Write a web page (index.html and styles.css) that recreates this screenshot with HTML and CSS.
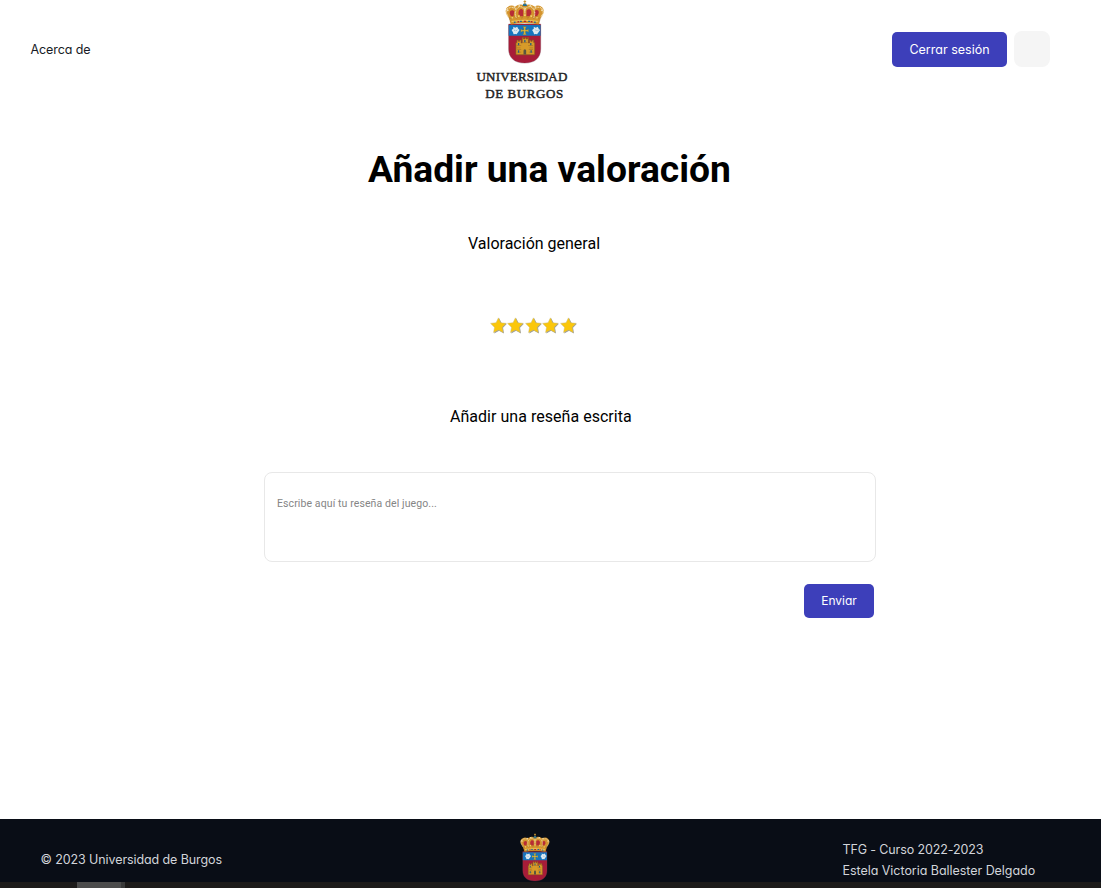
FILE: index.html
```html
<!DOCTYPE html>
<html lang="es">
<head>
<meta charset="utf-8">
<title>Añadir una valoración</title>
<link rel="stylesheet" href="styles.css">
</head>
<body>
<svg class="symbols" aria-hidden="true">
  <symbol id="crest" viewBox="14 0 124 192">
    <path d="M25 72h97v75c0 28-18 43-48.500 43S25 175 25 147z" fill="#a81c38"/>
    <path d="M25 75h97v32H25z" fill="#1674bd"/>
    <path d="M25 72h97v75c0 28-18 43-48.500 43S25 175 25 147z" fill="none" stroke="#714457" stroke-width="1"/>
    <g fill="#dce8ef">
      <path d="M39 80l6 3 6-3 3 6 4 4-4 6-5 7-4-1-5 1-2-6-4-7 5-4z"/>
      <path d="M101 80l6 3 6-3 3 6 4 4-4 6-5 7-4-1-5 1-2-6-4-7 5-4z"/>
    </g>
    <path d="M41 90l4 2m6-3l-4 4m59-3l4 2m6-3l-4 4" stroke="#75a9d0" stroke-width="2"/>
    <path d="M68 80h11l-3 4v6h5l4-3v10l-4-3h-5v6l3 4H68l3-4v-6h-5l-4 3V87l4 3h5v-6z" fill="#dfb83d" stroke="#77752f"/>
    <path d="M47 165v-37h3v-8h4v4h4v-4h5v9h3v-16h4v4h4v-4h4v4h4v-4h3v16h3v-9h4v4h4v-4h5v8h3v37z" fill="#d79b29" stroke="#805622" stroke-width="2"/>
    <path d="M49 137h14m21 0h15M51 149h12m23 0h13M51 157h12m23 0h13M66 128h16M49 144h12m27 0h11" stroke="#a4702a" stroke-width="2"/>
    <path d="M70 164v-11q0-5 4-5t4 5v11z" fill="#5a5540"/>
    <path d="M53 129h4v7h-4zm37 0h4v7h-4zM72 120h4v7h-4zM53 151h4v8h-4zm38 0h4v8h-4z" fill="#235d82"/>
    <path d="M27 55Q10 33 20 22q11-11 25-3Q58 8 74 16q15-8 29 3 14-7 24 3 11 12-7 33l-5 14H32z" fill="#d4942d"/>
    <path d="M32 48Q25 38 31 32q5-4 11 1l-2 15zm25 0Q51 34 60 27q6-2 9 4v17zm22 0V31q5-6 11-3 8 6 0 20zm25 0l-1-15q7-6 12-1 4 7-4 16z" fill="#b72c36"/>
    <path d="M26 53Q10 32 24 24q12-7 24 4m0 27Q40 28 56 20q13-4 18 10 5-14 19-10 16 8 8 35m0-27q12-11 23-4 13 8-3 29M74 20v35" fill="none" stroke="#efd9a6" stroke-width="4" stroke-dasharray="3 2"/>
    <path d="M26 51l7 6 7-10 8 9 9-13 8 12 9-14 9 14 9-12 9 13 8-9 6 10 7-6-6 22Q73 65 32 73z" fill="#d4962d" stroke="#99602b"/>
    <path d="M34 64q39-7 79 0" fill="none" stroke="#f1cf67" stroke-width="3"/>
    <path d="M41 67l5-1m13-2h6m19 0h6m12 2l5 1" stroke="#1b6899" stroke-width="4"/>
    <path d="M71 64h7m-26 1h4m36 0h5" stroke="#b12033" stroke-width="4"/>
    <path d="M34 53h4m15-5h5m13-3h6m14 3h5m13 5h4" stroke="#f3d069" stroke-width="5"/>
    <circle cx="74" cy="15" r="6" fill="#206c91"/>
    <path d="M74 0v12m-4-8h8M65 19h18" stroke="#c99430" stroke-width="3"/>
    <g fill="#f1dfb0"><circle cx="22" cy="30" r="3"/><circle cx="43" cy="20" r="3"/><circle cx="57" cy="17" r="3"/><circle cx="91" cy="17" r="3"/><circle cx="106" cy="20" r="3"/><circle cx="126" cy="30" r="3"/></g>
  </symbol>
  <symbol id="star" viewBox="0 0 18 18">
    <path d="M9.500 1.200l2.500 5 5.500.7-4 4.100 1 6-5-2.700-5.100 2.700 1-6-4-4.100 5.500-.7z" fill="#979b9e"/>
    <path d="M8.700.9l2.400 5 5.600.7-4.100 4 1 5.500-4.900-2.600-5 2.600 1-5.500-4.100-4 5.700-.7z" fill="#fbc70b" stroke="#cdbb70" stroke-width=".5"/>
  </symbol>
</svg>
<header class="header">
  <nav class="nav"><a class="about">Acerca de</a></nav>
  <div class="brand">
    <svg class="brand-crest"><use href="#crest"/></svg>
    <span class="brand-first">UNIVERSIDAD</span>
    <span class="brand-second">DE BURGOS</span>
  </div>
  <div class="actions">
    <button class="button logout">Cerrar sesión</button>
    <span class="avatar"></span>
  </div>
</header>
<main class="main">
  <h1 class="title">Añadir una valoración</h1>
  <h2 class="label rating-label">Valoración general</h2>
  <div class="stars">
    <svg><use href="#star"/></svg><svg><use href="#star"/></svg><svg><use href="#star"/></svg><svg><use href="#star"/></svg><svg><use href="#star"/></svg>
  </div>
  <h2 class="label review-label">Añadir una reseña escrita</h2>
  <div class="review"><span class="placeholder">Escribe aquí tu reseña del juego...</span></div>
  <button class="button send">Enviar</button>
</main>
<footer class="footer">
  <p class="copyright">© 2023 Universidad de Burgos</p>
  <svg class="footer-crest"><use href="#crest"/></svg>
  <div class="credits"><p class="course">TFG - Curso 2022-2023</p><p class="author">Estela Victoria Ballester Delgado</p></div>
</footer>
<div class="strip"><span class="thumb"></span></div>
</body>
</html>
```
FILE: styles.css
```css
* { box-sizing: border-box; }
body { margin: 0; height: 888px; overflow: hidden; display: flex; flex-direction: column; background: #fff; color: #000; font-family: Roboto, sans-serif; }
h1, h2, p { margin: 0; }
.symbols { position: absolute; width: 0; height: 0; }
.header { height: 105px; display: grid; grid-template-columns: 472px 100px 1fr; font-family: Inter, sans-serif; font-feature-settings: "cv11"; }
.nav { padding: 40px 0 0 30.500px; }
.about { display: block; color: #171a25; font-size: 12.500px; line-height: 20px; letter-spacing: -.1px; white-space: nowrap; }
.brand { display: flex; flex-direction: column; align-items: center; font-family: "Liberation Serif", serif; color: #242424; -webkit-text-stroke: .45px #242424; white-space: nowrap; }
.brand-crest { width: 41px; height: 64px; margin-left: 6px; flex: none; }
.brand-first { margin-top: 4px; font-size: 13px; line-height: 17px; letter-spacing: .2px; }
.brand-second { margin-left: 5px; font-size: 13px; line-height: 17px; letter-spacing: .6px; }
.actions { display: flex; align-items: flex-start; padding: 32px 0 0 320px; gap: 7px; }
.button { display: block; border: 0; padding: 0; border-radius: 5px; background: #3d3fba; color: #fff; font-family: Inter, sans-serif; font-feature-settings: "cv11"; white-space: nowrap; }
.logout { width: 115px; height: 35px; font-size: 12.500px; }
.avatar { width: 36px; height: 36px; margin-top: -1px; border-radius: 8px; background: #f5f5f5; }
.main { height: 714px; padding-left: 264px; display: flex; flex-direction: column; align-items: flex-start; }
.title { margin: 42px 0 0 104px; font-size: 37.200px; line-height: 44px; font-weight: 700; white-space: nowrap; }
.label { font-size: 16px; line-height: 20px; font-weight: 400; white-space: nowrap; }
.rating-label { margin: 43px 0 0 204px; }
.stars { display: flex; margin: 63px 0 0 226px; }
.stars svg { display: block; width: 17.400px; height: 17.400px; }
.review-label { margin: 71.600px 0 0 186px; letter-spacing: .03px; padding-top: 1px; }
.review { width: 612px; height: 90px; margin-top: 45px; padding: 24px 12px; border: 1px solid #e8e8e8; border-radius: 8px; }
.placeholder { display: block; color: #858585; font-size: 10.500px; line-height: 13px; letter-spacing: .1px; }
.send { width: 70px; height: 34px; margin: 22px 0 0 540px; font-size: 12px; }
.footer { height: 63px; display: grid; grid-template-columns: 519.500px 323px 1fr; background: #090d16; color: #d2d4da; font-family: Inter, sans-serif; font-feature-settings: "cv11"; font-size: 12.500px; line-height: 21px; letter-spacing: -.04px; white-space: nowrap; }
.copyright { padding: 30px 0 0 40.500px; letter-spacing: -.1px; }
.footer-crest { width: 31px; height: 49px; margin-top: 14px; }
.credits { padding-top: 20px; }
.course { letter-spacing: -.12px; }
.strip { height: 6px; padding-left: 77px; background: #1d1b1a; }
.thumb { display: block; width: 48px; height: 6px; background: #4c4c4c; border-right: 4px solid #393939; }
```
